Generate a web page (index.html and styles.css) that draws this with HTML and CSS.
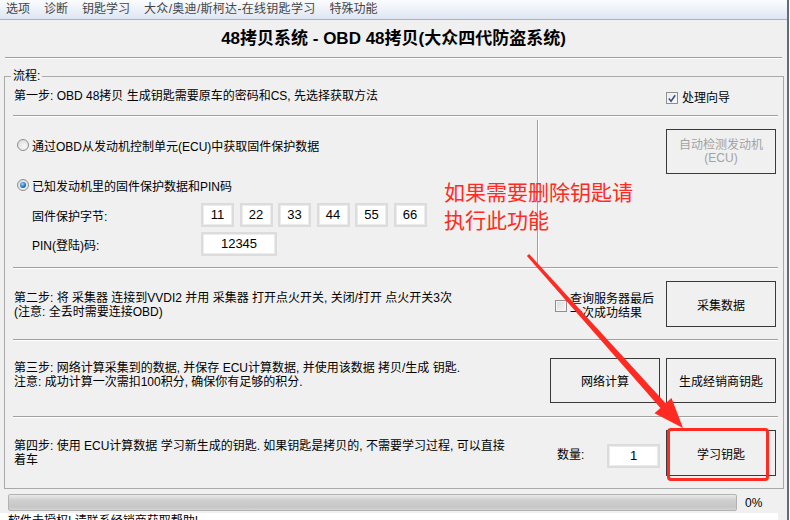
FILE: index.html
```html
<!DOCTYPE html>
<html lang="zh-CN">
<head>
    <meta charset="UTF-8">
    <title>48拷贝系统</title>
    <link rel="stylesheet" href="styles.css">
</head>
<body>
<div class="window">
    <div class="menubar">
        <span>选项</span>
        <span>诊断</span>
        <span>钥匙学习</span>
        <span class="wide-item">大众/奥迪/斯柯达-在线钥匙学习</span>
        <span>特殊功能</span>
    </div>

    <h1 class="title">48拷贝系统 - OBD 48拷贝(大众四代防盗系统)</h1>
    <div class="rule"></div>

    <fieldset class="flow">
        <legend>流程:</legend>

        <div class="row row-one">
            <div class="text">第一步: OBD 48拷贝 生成钥匙需要原车的密码和CS, 先选择获取方法</div>
            <label class="check wizard"><span class="box checked"><svg viewBox="0 0 11 11" width="11" height="11"><path d="M2 5.5 L4.5 8.5 L9 2" fill="none" stroke="#3d4f8c" stroke-width="1.8"/></svg></span>处理向导</label>
        </div>
        <div class="sep"></div>

        <div class="row row-method">
            <div class="method">
                <label class="radio first"><span class="dot"></span>通过OBD从发动机控制单元(ECU)中获取固件保护数据</label>
                <label class="radio second"><span class="dot on"></span>已知发动机里的固件保护数据和PIN码</label>
                <div class="field bytes">
                    <span class="field-label">固件保护字节:</span>
                    <span class="input">11</span>
                    <span class="input">22</span>
                    <span class="input">33</span>
                    <span class="input">44</span>
                    <span class="input">55</span>
                    <span class="input">66</span>
                </div>
                <div class="field pin">
                    <span class="field-label">PIN(登陆)码:</span>
                    <span class="input wide">12345</span>
                </div>
            </div>
            <button class="btn btn-detect" disabled>自动检测发动机<br>(ECU)</button>
        </div>
        <div class="sep"></div>

        <div class="row row-two">
            <div class="text">第二步: 将 采集器 连接到VVDI2 并用 采集器 打开点火开关, 关闭/打开 点火开关3次<br>(注意: 全丢时需要连接OBD)</div>
            <label class="check server"><span class="box"></span><span>查询服务器最后<br>一次成功结果</span></label>
            <button class="btn">采集数据</button>
        </div>
        <div class="sep"></div>

        <div class="row row-three">
            <div class="text">第三步: 网络计算采集到的数据, 并保存 ECU计算数据, 并使用该数据 拷贝/生成 钥匙.<br>注意: 成功计算一次需扣100积分, 确保你有足够的积分.</div>
            <button class="btn btn-net">网络计算</button>
            <button class="btn">生成经销商钥匙</button>
        </div>
        <div class="sep"></div>

        <div class="row row-four">
            <div class="text">第四步: 使用 ECU计算数据 学习新生成的钥匙. 如果钥匙是拷贝的, 不需要学习过程, 可以直接<br>着车</div>
            <span class="qty-label">数量:</span>
            <span class="input qty">1</span>
            <button class="btn">学习钥匙</button>
        </div>
    </fieldset>

    <div class="progress-row">
        <div class="progress"></div>
        <span class="percent">0%</span>
    </div>
    <div class="status">软件未授权! 请联系经销商获取帮助!</div>

    <div class="note">如果需要删除钥匙请<br>执行此功能</div>
    <div class="highlight"></div>
    <svg class="arrow" width="790" height="520" viewBox="0 0 790 520">
        <polygon points="529.1,254 665.6,403.3 671.5,398 683,428 654.5,413.2 660.4,407.9 526.9,256" fill="#ff2a22"/>
    </svg>
</div>
</body>
</html>
```

FILE: styles.css
```css
* {
    box-sizing: border-box;
}

body {
    margin: 0;
    width: 790px;
    height: 520px;
    overflow: hidden;
    background: #fff;
    font-family: "Liberation Sans", "Noto Sans CJK SC", sans-serif;
    font-size: 12px;
    color: #000;
}

.window {
    position: relative;
    width: 789px;
    height: 520px;
    background: #f0f0f0;
    border-right: 2px solid #5d6d80;
}

.menubar {
    display: flex;
    gap: 14px;
    height: 20px;
    padding-left: 6px;
    line-height: 18px;
    color: #444;
    background: linear-gradient(#fbfcfe, #dfe6f2);
    border-bottom: 1px solid #a9b3c3;
}

.wide-item {
    letter-spacing: 0.3px;
}

.title {
    margin: 0;
    height: 37px;
    line-height: 37px;
    text-align: center;
    font-size: 17px;
    font-weight: bold;
}

.rule {
    margin: 0 5px 0 5px;
    border-top: 1px solid #a0a0a0;
    border-bottom: 1px solid #fff;
}

.flow {
    margin: 10px 3px 0 4px;
    padding: 0 5px 0 8px;
    border: 1px solid #a9a9a9;
    min-width: 0;
}

.flow legend {
    margin-left: -2px;
    padding: 0 2px;
    line-height: 14px;
}

.sep {
    border-top: 1px solid #a0a0a0;
    border-bottom: 1px solid #fff;
}

.row {
    display: flex;
    align-items: flex-start;
}

.text {
    line-height: 14px;
    padding-left: 1px;
    white-space: nowrap;
}

/* step one */
.row-one {
    height: 32px;
    padding-top: 6px;
}

.check {
    display: flex;
    align-items: center;
    gap: 4px;
    line-height: 14px;
    white-space: nowrap;
}

.box {
    width: 12px;
    height: 12px;
    border: 1px solid #8e8f8f;
    background: linear-gradient(135deg, #dcdcdc, #f6f6f6);
    box-shadow: inset 0 0 0 1px #f4f4f4;
    display: flex;
    align-items: center;
    justify-content: center;
}

.box.checked {
    background: linear-gradient(135deg, #e8e8ee, #fff);
}

.wizard {
    margin: 2px 0 0 auto;
    width: 112px;
}

/* method choice */
.row-method {
    height: 150px;
}

.method {
    width: 525px;
    height: 147px;
    margin-top: 3px;
    border-right: 1px solid #a0a0a0;
    box-shadow: 1px 0 0 #fff;
}

.radio {
    display: flex;
    align-items: center;
    gap: 3px;
    height: 14px;
    padding-left: 4px;
    white-space: nowrap;
}

.radio.first {
    margin-top: 18px;
}

.radio.second {
    margin-top: 26px;
}

.dot {
    width: 12px;
    height: 12px;
    border-radius: 50%;
    border: 1px solid #8f8f8f;
    background: radial-gradient(circle at 60% 65%, #f8f8f8, #d6d6d6);
    display: flex;
    align-items: center;
    justify-content: center;
}

.dot.on::after {
    content: "";
    width: 6px;
    height: 6px;
    border-radius: 50%;
    background: radial-gradient(circle at 40% 35%, #9fd3ff, #1c6fc0 60%, #0d4b8f);
}

.field {
    display: flex;
    align-items: center;
    gap: 5.5px;
    height: 24px;
    padding-left: 19px;
}

.field.bytes {
    margin-top: 11px;
}

.field.pin {
    margin-top: 5px;
}

.field-label {
    width: 163.5px;
    white-space: nowrap;
}

.input {
    width: 33px;
    height: 24px;
    border: 2px solid #dcdcdc;
    box-shadow: inset 0 0 0 1px #ececec;
    background: #fff;
    text-align: center;
    font-size: 13px;
    line-height: 20px;
}

.input.wide {
    width: 76px;
}

.btn {
    width: 110px;
    height: 46px;
    border: 1px solid #3a3a3a;
    background: #f0f0f0;
    font-family: inherit;
    font-size: 12px;
    color: #000;
    padding: 0;
    margin-right: 2px;
}

.btn-detect {
    margin: 12px 2px 0 auto;
    height: 45px;
    color: #a3a3a3;
    line-height: 13px;
}

/* step two */
.row-two {
    height: 70px;
}

.row-two .text {
    margin-top: 22px;
}

.server {
    margin: 23px 0 0 auto;
    gap: 3px;
}

.row-two .btn {
    margin-top: 12px;
    margin-left: 12px;
}

/* step three */
.row-three {
    height: 75px;
}

.row-three .text {
    margin-top: 20px;
}

.row-three .btn {
    margin-top: 17px;
    height: 45px;
}

.btn-net {
    margin-left: auto;
    margin-right: 6px;
}

/* step four */
.row-four {
    height: 70px;
}

.row-four .text {
    margin-top: 21px;
}

.qty-label {
    margin: 30px 0 0 auto;
    width: 50px;
    line-height: 14px;
}

.input.qty {
    width: 53px;
    margin-top: 26px;
}

.row-four .btn {
    margin-top: 12px;
    margin-left: 6px;
}

/* bottom */
.progress-row {
    display: flex;
    align-items: center;
    margin-top: 5px;
    padding-left: 8px;
    height: 17px;
}

.progress {
    width: 729px;
    height: 17px;
    border: 1px solid #b2b2b2;
    border-radius: 2px;
    background: linear-gradient(#e9e9e9, #cfcfcf 35%, #c6c6c6 80%, #d4d4d4);
}

.percent {
    margin-left: 8px;
}

.status {
    margin-top: 2px;
    width: 778px;
    height: 20px;
    padding-left: 8px;
    background: #fff;
    line-height: 16px;
}

/* annotation */
.note {
    position: absolute;
    left: 444px;
    top: 177px;
    font-family: "Noto Sans CJK SC", sans-serif;
    font-size: 21px;
    line-height: 28px;
    color: #ff2a22;
}

.highlight {
    position: absolute;
    left: 667px;
    top: 428px;
    width: 102px;
    height: 53px;
    border: 3px solid #ff2a22;
    border-radius: 4px;
}

.arrow {
    position: absolute;
    left: 0;
    top: 0;
    pointer-events: none;
}
```
